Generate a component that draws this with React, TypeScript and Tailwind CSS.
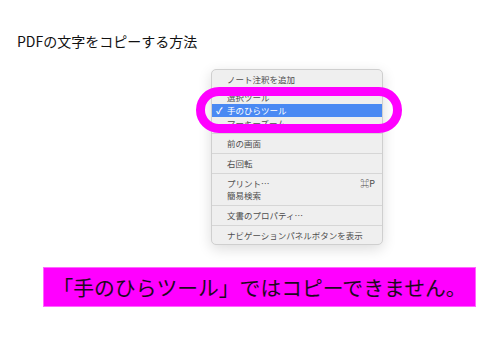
import React from "react";

type Item =
  | { label: string; checked?: boolean; active?: boolean; shortcut?: string; tall?: boolean }
  | { sep: number };

const items: Item[] = [
  { label: "ノート注釈を追加" },
  { sep: 6 },
  { label: "選択ツール", tall: true },
  { label: "手のひらツール", checked: true, active: true, tall: true },
  { label: "マーキーズーム" },
  { sep: 8 },
  { label: "前の画面" },
  { sep: 8 },
  { label: "右回転" },
  { sep: 8 },
  { label: "プリント…", shortcut: "⌘P" },
  { label: "簡易検索" },
  { sep: 8 },
  { label: "文書のプロパティ…" },
  { sep: 8 },
  { label: "ナビゲーションパネルボタンを表示" },
];

const ContextMenu = () => {
  return (
    <div className="ml-[211px] mt-[20px] w-[172px] rounded-[5px] border border-[#cfcfcf] bg-[#efefef] py-[3px] shadow-[0_4px_14px_rgba(0,0,0,0.14)]">
      {items.map((item, i) =>
        "sep" in item ? (
          <div key={i} className={`flex items-center ${item.sep === 6 ? "h-[6px]" : "h-[8px]"}`}>
            <div className="h-px w-full bg-[#d6d6d6]" />
          </div>
        ) : (
          <div
            key={i}
            className={`relative flex items-center pl-[15px] pr-[7px] text-[8.5px] leading-none ${
              item.tall ? "h-[13px]" : "h-[12px]"
            } ${item.active ? "bg-[#4a89f3] text-white" : "text-[#4d4d4d]"}`}
          >
            {item.checked && (
              <span className="absolute left-[4px] text-[9px] font-bold">✓</span>
            )}
            <span className="flex-1">{item.label}</span>
            {item.shortcut && <span className="text-[9px]">{item.shortcut}</span>}
          </div>
        )
      )}
    </div>
  );
};

const App = () => {
  return (
    <div className="relative h-[358px] w-[500px] overflow-hidden bg-white font-['Noto_Sans_CJK_JP',sans-serif]">
      <div className="pl-[17px] pt-[33px] text-[14px] leading-[16px] text-[#111]">
        PDFの文字をコピーする方法
      </div>
      <ContextMenu />
      <div className="ml-[43px] mt-[22px] flex h-[40px] w-[433px] items-center justify-center border border-[#ff66ff] bg-[#ff00ff] text-[20.8px] leading-none text-[#1c0a1c]">
        「手のひらツール」ではコピーできません。
      </div>
      {/* highlight oval drawn over the menu */}
      <div className="absolute left-[196px] top-[87px] h-[46px] w-[206px] rounded-full border-[9px] border-[#ff00ff]" />
    </div>
  );
};

export default App;
